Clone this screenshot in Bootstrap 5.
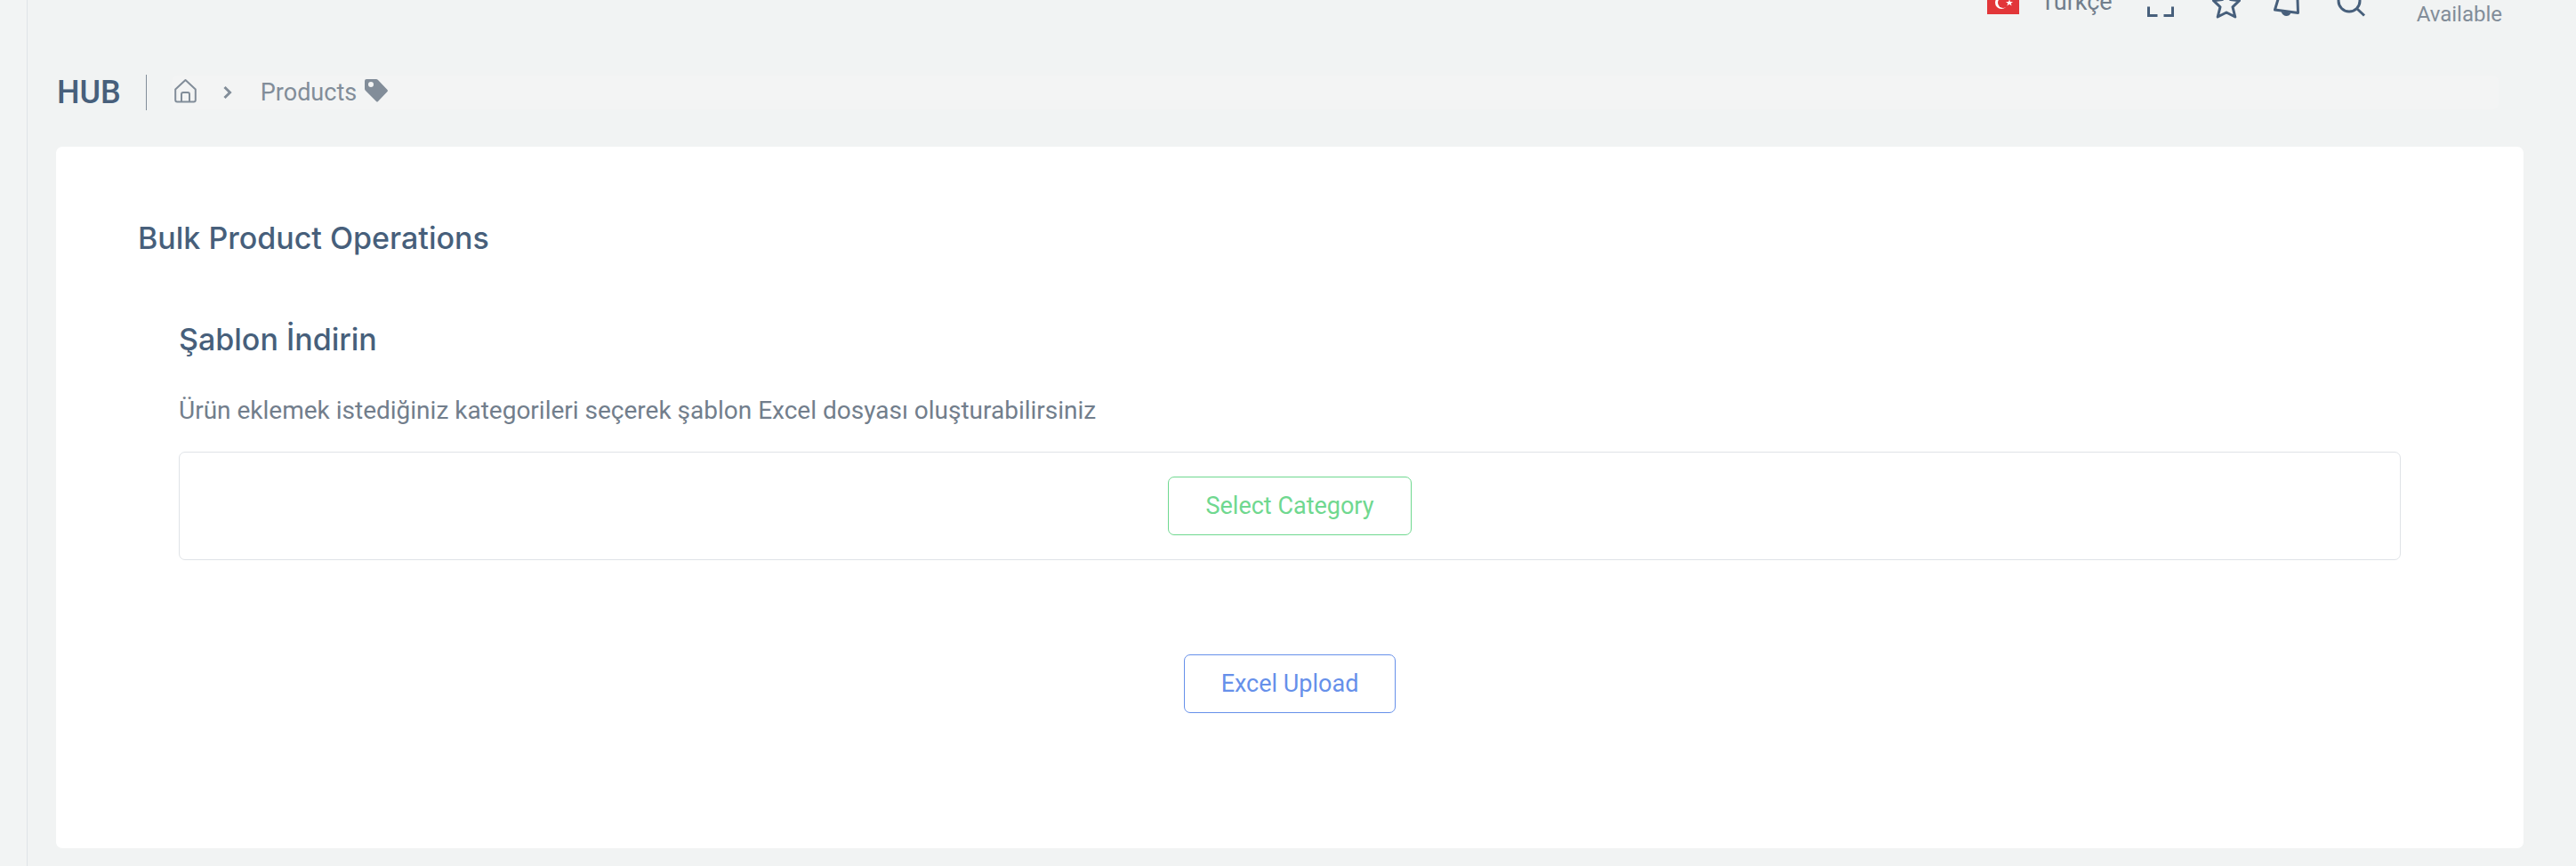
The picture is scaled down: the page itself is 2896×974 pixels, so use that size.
<!DOCTYPE html>
<html lang="en">
<head>
<meta charset="utf-8">
<meta name="viewport" content="width=device-width, initial-scale=1">
<title>HUB - Products</title>
<link href="https://cdn.jsdelivr.net/npm/bootstrap@5.3.0/dist/css/bootstrap.min.css" rel="stylesheet">
<style>
  body { background: #f2f4f4; color: #727e8c; font-family: Roboto, "Liberation Sans", sans-serif; font-size: 28px; line-height: 40px; overflow-x: hidden; }
  .side-edge { width: 31px; border-right: 1px solid #dfe3e7; }
  .main-area { background: #f1f3f3; padding: 0 59px 20px 32px; }
  .topbar { height: 80px; margin-top: -40px; padding-right: 24px; }
  .topbar svg, .crumbs svg { display: block; flex: none; }
  .tool-link { color: #475f7b; padding-top: 8px; }
  .language { color: #727e8c; font-size: 27px; gap: 24px; margin-right: 35px; padding-top: 4px; }
  .tools { gap: 31px; margin-right: 54px; }
  .status { color: #828d99; font-size: 24px; line-height: 32px; padding-top: 32px; }
  .titlebar { height: 125px; padding-top: 2px; }
  .brand { color: #475f7b; font-size: 36px; font-weight: 500; line-height: 40px; padding: 0 28px 0 1px; border-right: 1px solid #828d99; }
  .crumbs { background: #f3f4f4; border-radius: 7px; margin: 0 28px; height: 38px; padding-left: 3px; font-size: 27px; }
  .crumbs a { color: #828d99; }
  .crumbs a svg { margin-bottom: 4px; }
  .chevron { margin: 0 32px 0 30px; }
  .panel { border: 0; border-radius: 7px; padding: 83px 92px 152px; }
  .panel h1, .panel h2 { color: #475f7b; font-size: 34px; font-weight: 500; line-height: 40px; margin: 0; font-family: Inter, Roboto, sans-serif; }
  .section-body { padding: 74px 46px 0; }
  .lead-text { margin: 40px 0 26px; }
  .picker { border: 1px solid #dfe3e7; border-radius: 7px; padding: 27px; }
  .btn-wide { --bs-btn-font-size: 27px; --bs-btn-line-height: 40px; --bs-btn-padding-x: 41px; --bs-btn-padding-y: 12px; --bs-btn-border-radius: 7px; }
  .btn-pick { --bs-btn-color: #6fd88f; --bs-btn-border-color: #6fd88f; --bs-btn-hover-color: #fff; --bs-btn-hover-bg: #6fd88f; }
  .btn-upload { --bs-btn-color: #6690ea; --bs-btn-border-color: #6690ea; --bs-btn-hover-color: #fff; --bs-btn-hover-bg: #6690ea; margin-top: 106px; }
</style>
</head>
<body>
<div class="d-flex min-vh-100">
  <aside class="side-edge flex-shrink-0"></aside>
  <div class="main-area flex-grow-1">
    <header class="topbar d-flex justify-content-end align-items-center">
      <a href="#" class="language d-flex align-items-center text-decoration-none" lang="tr">
        <svg width="36" height="28" viewBox="0 0 36 28"><path fill="#e23639" d="M0 0h36v28H0z"/><circle cx="16" cy="15" r="7" fill="#fff"/><circle cx="18" cy="15" r="6" fill="#e23639"/><path fill="#fff" d="m25 11.500 1 2.500h3l-2.300 1.700.9 2.800-2.600-1.700-2.600 1.700.9-2.800L21 14h3z"/></svg>
        <span>Türkçe</span>
      </a>
      <nav class="tools d-flex align-items-center" aria-label="Tools">
        <a href="#" class="tool-link" aria-label="Full screen"><svg width="40" height="34" viewBox="0 0 40 34" fill="none" stroke="currentColor" stroke-width="3"><path d="M5.500 12.500v-10h10M22.500 2.500h10v10M32.500 20.500v10h-10M15.500 30.500h-10v-10"/></svg></a>
        <a href="#" class="tool-link" aria-label="Favourites"><svg width="40" height="34" viewBox="0 0 40 34" fill="none" stroke="currentColor" stroke-width="3" stroke-linejoin="round"><path d="m22 3 4.500 9.500 10 1.200-7.500 7.100 2.800 11.200L22 27l-9.800 5L15 20.800l-7.500-7.100 10-1.200z"/></svg></a>
        <a href="#" class="tool-link" aria-label="Notifications"><svg width="40" height="34" viewBox="0 0 40 34" fill="none" stroke="currentColor" stroke-width="3" stroke-linejoin="round"><path d="M5.500 24 10 9c2-6 7-8 12-7s9 4 9 11l.5 14.500z"/><path fill="currentColor" stroke="none" d="m12.500 26 11 1.500c-2 5-9 5-11-1.500z"/></svg></a>
        <a href="#" class="tool-link" aria-label="Search"><svg width="40" height="34" viewBox="0 0 40 34" fill="none" stroke="currentColor" stroke-width="3"><circle cx="18" cy="14" r="12"/><path d="m26 22 9 8.500"/></svg></a>
      </nav>
      <span class="status">Available</span>
    </header>
    <div class="titlebar d-flex align-items-center">
      <div class="brand">HUB</div>
      <nav class="crumbs d-flex align-items-center flex-grow-1" aria-label="Breadcrumb">
        <a href="#" aria-label="Home"><svg width="25" height="28" viewBox="0 0 25 28" fill="none" stroke="currentColor" stroke-width="2" stroke-linejoin="round"><path d="M1.200 12.500 12.500 2l11.300 10.500v12a2 2 0 0 1-2 2H3.200a2 2 0 0 1-2-2zM8 26.500V18a2 2 0 0 1 2-2h5a2 2 0 0 1 2 2v8.500"/></svg></a>
        <svg class="chevron" width="10" height="16" viewBox="0 0 10 16" fill="none" stroke="#828d99" stroke-width="3"><path d="m1.500 2 6 6-6 6"/></svg>
        <a href="#" class="d-flex align-items-center gap-2 text-decoration-none">Products
          <svg width="28" height="28" viewBox="0 0 28 28"><path fill="currentColor" fill-rule="evenodd" d="M3 1h11q1 0 2 1l10.500 11q1 1 0 2L16 26q-1 1-2 0L2 14q-1-1-1-2V3q0-2 2-2zm5 3a3 3 0 1 0 0 6 3 3 0 0 0 0-6z"/></svg></a>
      </nav>
    </div>
    <main class="panel card">
      <h1>Bulk Product Operations</h1>
      <section class="section-body d-flex flex-column" lang="tr">
        <h2>Şablon İndirin</h2>
        <p class="lead-text">Ürün eklemek istediğiniz kategorileri seçerek şablon Excel dosyası oluşturabilirsiniz</p>
        <div class="picker d-flex justify-content-center">
          <button type="button" class="btn btn-wide btn-pick" lang="en">Select Category</button>
        </div>
        <button type="button" class="btn btn-wide btn-upload align-self-center" lang="en">Excel Upload</button>
      </section>
    </main>
  </div>
</div>
<script src="https://cdn.jsdelivr.net/npm/bootstrap@5.3.0/dist/js/bootstrap.bundle.min.js"></script>
</body>
</html>
